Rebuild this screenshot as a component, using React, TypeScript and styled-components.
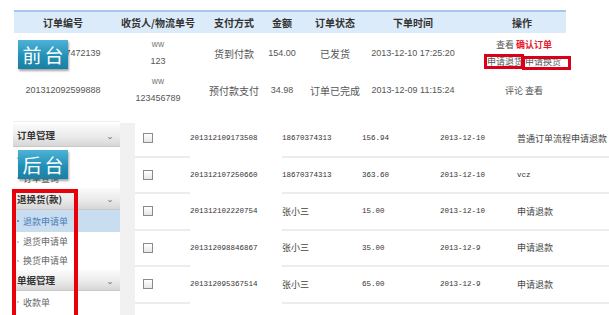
import React from "react";
import styled, { createGlobalStyle } from "styled-components";

const Global = createGlobalStyle`
  html, body { margin: 0; padding: 0; background: #fff; }
  body { width: 609px; height: 315px; overflow: hidden; font-family: "Liberation Sans", "Noto Sans CJK SC", sans-serif; }
  * { box-sizing: border-box; }
`;

const Page = styled.div`
  position: relative;
  width: 609px;
  height: 315px;
  overflow: hidden;
`;

const Front = styled.section`
  position: relative;
  padding: 10px 0 0 14px;
  height: 121px;
`;

const OrderTable = styled.div`
  width: 552px;
`;

const cols = "98px 92px 60px 36px 70px 86px 110px";

const HeadRow = styled.div`
  display: grid;
  grid-template-columns: ${cols};
  height: 23px;
  background: #dcebf9;
  border-top: 2px solid #a8c5ea;
`;

const HeadCell = styled.div<{ $shift?: number }>`
  display: flex;
  align-items: center;
  justify-content: center;
  padding-left: ${(p) => p.$shift ?? 0}px;
  font-family: "Noto Sans CJK SC", sans-serif;
  font-weight: 700;
  font-size: 10px;
  color: #333;
`;

const Row = styled.div<{ $h: number }>`
  display: grid;
  grid-template-columns: ${cols};
  height: ${(p) => p.$h}px;
`;

const Cell = styled.div<{ $shift?: number }>`
  display: flex;
  flex-direction: column;
  align-items: center;
  justify-content: center;
  padding-left: ${(p) => p.$shift ?? 0}px;
  font-family: "Liberation Sans", "Noto Sans CJK SC", sans-serif;
  font-size: 9px;
  line-height: 17px;
  color: #555;
  white-space: nowrap;
`;

const Cjk = styled.span<{ $size?: number }>`
  font-family: "Noto Sans CJK SC", sans-serif;
  font-size: ${(p) => p.$size ?? 10}px;
`;

const Small = styled.span`
  font-size: 8.5px;
  color: #777;
`;

const RedLink = styled.span`
  color: #e8192c;
  font-weight: 700;
`;

const Marked = styled.span<{ $t: number; $r: number; $b: number; $l: number }>`
  position: relative;
  &::after {
    content: "";
    position: absolute;
    top: ${(p) => p.$t}px;
    right: ${(p) => p.$r}px;
    bottom: ${(p) => p.$b}px;
    left: ${(p) => p.$l}px;
    border: 3px solid #d8001a;
  }
`;

const Badge = styled.div<{ $top: number }>`
  position: absolute;
  left: 18px;
  top: ${(p) => p.$top}px;
  width: 50px;
  height: 29px;
  display: flex;
  align-items: center;
  justify-content: center;
  background: linear-gradient(#4db3d6, #2291b8 55%, #1b7fa3);
  box-shadow: 1px 2px 2px rgba(0, 0, 0, 0.35);
  color: #fff;
  font-family: "Noto Sans CJK SC", sans-serif;
  font-size: 19px;
  letter-spacing: 3px;
  padding-left: 3px;
  z-index: 2;
`;

const Back = styled.section`
  position: relative;
  display: flex;
  padding-left: 13px;
  height: 194px;
`;

const Sidebar = styled.nav`
  width: 107px;
  padding-top: 2px;
  border-top: 1px solid #eee;
`;

const MenuHead = styled.div<{ $h: number }>`
  display: flex;
  align-items: center;
  justify-content: space-between;
  height: ${(p) => p.$h}px;
  padding: 0 6px 0 4px;
  background: linear-gradient(#fbfbfb, #e9e9e9 60%, #d6d6d6);
  border-bottom: 1px solid #c9c9c9;
  font-family: "Noto Sans CJK SC", sans-serif;
  font-weight: 700;
  font-size: 9.5px;
  color: #333;
`;

const Chevron = styled.span`
  font-size: 8px;
  color: #777;
  font-weight: 400;
  transform: scaleX(1.2);
`;

const MenuItem = styled.div<{ $h: number; $active?: boolean }>`
  display: flex;
  align-items: center;
  gap: 4px;
  height: ${(p) => p.$h}px;
  padding-left: 4px;
  background: ${(p) => (p.$active ? "#c9ddf0" : "#fff")};
  font-family: "Noto Sans CJK SC", sans-serif;
  font-size: 9px;
  color: ${(p) => (p.$active ? "#4a7cb8" : "#666")};
  &::before {
    content: "";
    width: 2px;
    height: 2px;
    border-radius: 1px;
    background: ${(p) => (p.$active ? "#4a7cb8" : "#bbb")};
  }
`;

const Gutter = styled.div`
  width: 15px;
  background: #f1f1f1;
  margin-top: 2px;
`;

const List = styled.div`
  flex: 1;
`;

const listCols = "55px 92px 80px 78px 77px 1fr";

const ListRow = styled.div`
  display: grid;
  grid-template-columns: ${listCols};
  height: 36.5px;
`;

const ListCell = styled.div<{ $line?: boolean }>`
  display: flex;
  align-items: center;
  font-family: "Liberation Mono", "Noto Sans CJK SC", monospace;
  font-size: 7.5px;
  color: #333;
  white-space: nowrap;
  border-bottom: 2px solid ${(p) => (p.$line ? "#ececec" : "transparent")};
`;

const CheckCell = styled(ListCell)`
  padding-left: 8px;
`;

const Box = styled.span`
  width: 10px;
  height: 10px;
  border: 1px solid #8a8a8a;
  background: linear-gradient(#fff, #e6e6e6);
`;

const Note = styled.span`
  font-family: "Noto Sans CJK SC", sans-serif;
  font-size: 9px;
  color: #444;
`;

const RedFrame = styled.div`
  position: absolute;
  left: 12px;
  top: 68px;
  width: 66px;
  height: 140px;
  border: 4px solid #e8000b;
  z-index: 3;
`;

const backRows = [
  { no: "201312109173508", who: "18670374313", amt: "156.94", date: "2013-12-10", note: "普通订单流程申请退款" },
  { no: "201312107250660", who: "18670374313", amt: "363.60", date: "2013-12-10", note: "vcz" },
  { no: "201312102220754", who: "张小三", amt: "15.00", date: "2013-12-10", note: "申请退款" },
  { no: "201312098846867", who: "张小三", amt: "35.00", date: "2013-12-9", note: "申请退款" },
  { no: "201312095367514", who: "张小三", amt: "65.00", date: "2013-12-9", note: "申请退款" },
];

const isCjk = (s: string) => /[\u4e00-\u9fff]/.test(s);

export default function App() {
  return (
    <Page>
      <Global />
      <Front>
        <OrderTable>
          <HeadRow>
            <HeadCell>订单编号</HeadCell>
            <HeadCell>收货人/物流单号</HeadCell>
            <HeadCell>支付方式</HeadCell>
            <HeadCell>金额</HeadCell>
            <HeadCell>订单状态</HeadCell>
            <HeadCell>下单时间</HeadCell>
            <HeadCell $shift={22}>操作</HeadCell>
          </HeadRow>
          <Row $h={40}>
            <Cell>201312107472139</Cell>
            <Cell>
              <Small>ww</Small>
              <span>123</span>
            </Cell>
            <Cell><Cjk>货到付款</Cjk></Cell>
            <Cell>154.00</Cell>
            <Cell><Cjk>已发货</Cjk></Cell>
            <Cell>2013-12-10 17:25:20</Cell>
            <Cell $shift={26}>
              <Cjk $size={9}>查看 <RedLink>确认订单</RedLink></Cjk>
              <Cjk $size={9}>
                <Marked $t={-1} $r={-1} $b={-1} $l={-3}>申请退货</Marked>{" "}
                <Marked $t={1} $r={-10} $b={-2} $l={-3}>申请换货</Marked>
              </Cjk>
            </Cell>
          </Row>
          <Row $h={34}>
            <Cell>201312092599888</Cell>
            <Cell>
              <Small>ww</Small>
              <span>123456789</span>
            </Cell>
            <Cell><Cjk>预付款支付</Cjk></Cell>
            <Cell>34.98</Cell>
            <Cell><Cjk>订单已完成</Cjk></Cell>
            <Cell>2013-12-09 11:15:24</Cell>
            <Cell $shift={26}><Cjk $size={9}>评论 查看</Cjk></Cell>
          </Row>
        </OrderTable>
        <Badge $top={40}>前台</Badge>
      </Front>
      <Back>
        <Sidebar>
          <MenuHead $h={23}>订单管理<Chevron>⌄</Chevron></MenuHead>
          <MenuItem $h={21}>订单列表</MenuItem>
          <MenuItem $h={20}>订单查询</MenuItem>
          <MenuHead $h={22}>退换货(款)<Chevron>⌄</Chevron></MenuHead>
          <MenuItem $h={22} $active>退款申请单</MenuItem>
          <MenuItem $h={19}>退货申请单</MenuItem>
          <MenuItem $h={19}>换货申请单</MenuItem>
          <MenuHead $h={21}>单据管理<Chevron>⌄</Chevron></MenuHead>
          <MenuItem $h={22}>收款单</MenuItem>
        </Sidebar>
        <Gutter />
        <List>
          {backRows.map((r) => (
            <ListRow key={r.no}>
              <CheckCell $line><Box /></CheckCell>
              <ListCell>{r.no}</ListCell>
              <ListCell $line>{isCjk(r.who) ? <Note>{r.who}</Note> : r.who}</ListCell>
              <ListCell $line>{r.amt}</ListCell>
              <ListCell $line>{r.date}</ListCell>
              <ListCell $line>{isCjk(r.note) ? <Note>{r.note}</Note> : r.note}</ListCell>
            </ListRow>
          ))}
        </List>
        <Badge $top={29}>后台</Badge>
        <RedFrame />
      </Back>
    </Page>
  );
}
